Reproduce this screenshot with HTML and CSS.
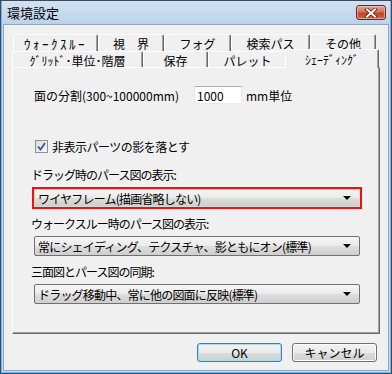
FILE: index.html
```html
<!DOCTYPE html>
<html lang="ja">
<head>
    <meta charset="utf-8">
    <title>環境設定</title>
    <link rel="stylesheet" href="styles.css">
</head>
<body>
    <div class="window">
        <div class="titlebar">
            <span class="title">環境設定</span>
            <button class="close-btn" aria-label="閉じる">
                <svg width="14" height="10" viewBox="0 0 14 10">
                    <path d="M3 1.5 L11 8.5 M11 1.5 L3 8.5" stroke="#5a1a10" stroke-width="3.6" stroke-linecap="square"/>
                    <path d="M3 1.5 L11 8.5 M11 1.5 L3 8.5" stroke="#fff" stroke-width="2" stroke-linecap="square"/>
                </svg>
            </button>
        </div>
        <div class="client">
            <div class="tab-row back-row">
                <div class="tab wide-kana" style="width: 85px">ｳｫｰｸｽﾙｰ</div>
                <div class="tab" style="width: 66px">視　界</div>
                <div class="tab" style="width: 67px">フォグ</div>
                <div class="tab" style="width: 79px">検索パス</div>
                <div class="tab" style="width: 66px">その他</div>
            </div>
            <div class="tab-row front-row">
                <div class="tab" style="width: 131px">ｸﾞﾘｯﾄﾞ･単位･階層</div>
                <div class="tab" style="width: 65px">保存</div>
                <div class="tab" style="width: 79px">パレット</div>
                <div class="tab active" style="width: 94px">ｼｪｰﾃﾞｨﾝｸﾞ</div>
            </div>
            <div class="panel">
                <div class="field-row">
                    <span class="field-label">面の分割(300~100000mm)</span>
                    <input class="num-input" type="text" value="1000">
                    <span class="unit">mm単位</span>
                </div>
                <label class="check-row">
                    <span class="checkbox">
                        <svg width="11" height="11" viewBox="0 0 11 11">
                            <path d="M2 5.5 L4.5 8.5 L9 2" fill="none" stroke="#3d5598" stroke-width="1.8"/>
                        </svg>
                    </span>
                    非表示パーツの影を落とす
                </label>
                <div class="group-label">ドラッグ時のパース図の表示:</div>
                <div class="highlight">
                    <div class="combo combo-inner">
                        <span>ワイヤフレーム(描画省略しない)</span>
                        <span class="arrow"></span>
                    </div>
                </div>
                <div class="group-label">ウォークスルー時のパース図の表示:</div>
                <div class="combo">
                    <span>常にシェイディング、テクスチャ、影ともにオン(標準)</span>
                    <span class="arrow"></span>
                </div>
                <div class="group-label">三面図とパース図の同期:</div>
                <div class="combo">
                    <span>ドラッグ移動中、常に他の図面に反映(標準)</span>
                    <span class="arrow"></span>
                </div>
            </div>
            <div class="buttons">
                <button class="btn default">OK</button>
                <button class="btn">キャンセル</button>
            </div>
        </div>
    </div>
</body>
</html>
```

FILE: styles.css
```css
body {
    margin: 0;
    font-family: "Noto Sans CJK JP", "Noto Sans", sans-serif;
    font-size: 12px;
    color: #000;
    background: #fff;
}
.window {
    width: 392px;
    height: 374px;
    box-sizing: border-box;
    border: 1px solid #3a4b60;
    box-shadow: inset 0 0 0 1px #74b6e6;
    background: #c3d7ee;
    display: flex;
    flex-direction: column;
}
.titlebar {
    height: 23px;
    display: flex;
    align-items: flex-start;
    background: linear-gradient(#d2e2f3, #bcd2ea);
    margin: 0 1px;
}
.title {
    font-size: 13px;
    line-height: 14px;
    margin: 5px 0 0 5px;
}
.close-btn {
    margin: 4px 4px 0 auto;
    width: 30px;
    height: 15px;
    padding: 0;
    border: 1px solid #6e2618;
    border-radius: 3px;
    background: linear-gradient(#e6a493, #d2735c 45%, #bf4528 55%, #d0664a);
    box-shadow: inset 0 0 0 1px rgba(255, 220, 210, 0.5);
    display: flex;
    align-items: center;
    justify-content: center;
}
.client {
    flex: 1;
    margin: 0 2px 2px 2px;
    border: 1px solid #8fa6c0;
    background: #f0f0f0;
}
.tab-row {
    display: flex;
}
.back-row {
    margin: 9px 0 0 9px;
    height: 17px;
}
.front-row {
    margin: -2px 0 0 8px;
    height: 18px;
    align-items: flex-end;
}
.tab {
    height: 17px;
    box-sizing: border-box;
    padding-top: 2px;
    line-height: 14px;
    text-align: center;
    white-space: nowrap;
    background: #f0f0f0;
    border-top: 1px solid #fff;
    border-left: 1px solid #fff;
    border-right: 1px solid #696969;
    border-radius: 2px 2px 0 0;
    box-shadow: inset -1px 0 #a0a0a0;
}
.tab.wide-kana {
    font-size: 13px;
    letter-spacing: 2.5px;
}
.front-row .tab {
    height: 16px;
}
.front-row .tab.active {
    height: 19px;
    margin: 0 -2px -1px -2px;
    padding-top: 3px;
    position: relative;
}
.panel {
    margin: 0 8px;
    height: 267px;
    box-sizing: border-box;
    border-top: 1px solid #fff;
    border-left: 1px solid #fff;
    border-right: 1px solid #696969;
    border-bottom: 1px solid #696969;
    box-shadow: inset -1px -1px #a0a0a0;
    padding: 18px 0 0 19px;
}
.field-row {
    display: flex;
    align-items: center;
    height: 18px;
    margin-left: 2px;
}
.field-label {
    width: 160px;
}
.num-input {
    width: 48px;
    height: 18px;
    box-sizing: border-box;
    border: 1px solid #e3e9ef;
    border-top-color: #abadb3;
    background: #fff;
    font: inherit;
    padding: 0 2px;
    margin: 0 4px 0 0;
}
.check-row {
    display: flex;
    align-items: center;
    height: 16px;
    margin: 34px 0 0 3px;
    letter-spacing: -0.5px;
}
.checkbox {
    width: 13px;
    height: 13px;
    box-sizing: border-box;
    border: 1px solid #8e8f8f;
    background: linear-gradient(135deg, #dcdcdc, #f6f6f6);
    display: flex;
    align-items: center;
    justify-content: center;
    margin-right: 4px;
}
.group-label {
    height: 16px;
    line-height: 16px;
    margin: 13px 0 0 -1px;
    letter-spacing: -1px;
}
.highlight {
    width: 330px;
    height: 22px;
    box-sizing: border-box;
    border: 2px solid #ee1111;
    margin-top: 4px;
}
.highlight + .group-label {
    margin-top: 7px;
}
.combo {
    width: 326px;
    height: 20px;
    box-sizing: border-box;
    margin: 4px 0 0 2px;
    border: 1px solid #707070;
    border-radius: 2px;
    background: linear-gradient(#f4f4f4, #ebebeb 50%, #dddddd 51%, #cfcfcf);
    display: flex;
    align-items: center;
    padding: 0 5px 0 3px;
    white-space: nowrap;
    letter-spacing: -0.8px;
}
.combo + .group-label {
    margin-top: 8px;
}
.combo-inner {
    width: 326px;
    height: 18px;
    margin: 0;
    border-color: #d8d8d8;
    border-radius: 0;
}
.arrow {
    margin-left: auto;
    margin-right: 3px;
    width: 0;
    height: 0;
    border-left: 4px solid transparent;
    border-right: 4px solid transparent;
    border-top: 4px solid #000;
}
.buttons {
    display: flex;
    justify-content: flex-end;
    gap: 10px;
    margin: 9px 11px 0 0;
}
.btn {
    width: 85px;
    height: 19px;
    padding: 0;
    font: inherit;
    border: 1px solid #707070;
    border-radius: 3px;
    background: linear-gradient(#f2f2f2, #ebebeb 50%, #dddddd 51%, #cfcfcf);
    box-shadow: inset 0 0 0 1px #fcfcfc;
}
.btn.default {
    border-color: #3c7fb1;
    box-shadow: inset 0 0 0 1px #a8dcf5;
}
```
